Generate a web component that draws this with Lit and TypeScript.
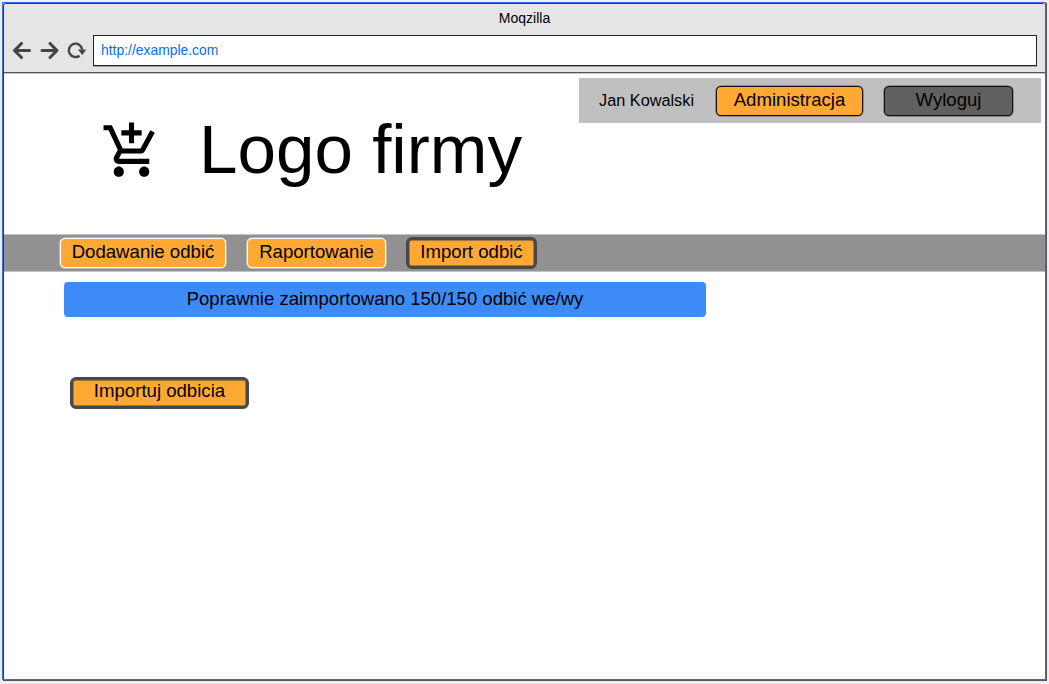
import { LitElement, html, css } from "lit";
import { customElement } from "lit/decorators.js";

@customElement("app-root")
export class AppRoot extends LitElement {
  static styles = css`
    :host {
      display: block;
      box-sizing: border-box;
      width: 1049px;
      height: 684px;
      padding: 2px;
      background: #eeeeee;
      overflow: hidden;
      font-family: "Liberation Sans", Arial, sans-serif;
      color: #000;
      white-space: nowrap;
    }
    * { box-sizing: border-box; }
    svg { display: block; flex: none; }
    .frame {
      width: 1044px;
      height: 678px;
      border: 1px solid #3a68e8;
      box-shadow: 1px 1px 0 #55556a;
    }
    .window {
      height: 676px;
      border-top: 1px solid #333b55;
      border-left: 1px solid #333b55;
      border-top-left-radius: 3px;
      border-top-right-radius: 3px;
      background: #fff;
      overflow: hidden;
    }
    .chrome {
      height: 69px;
      background: #e5e5e5;
      border-bottom: 1px solid #555;
    }
    .title {
      height: 31px;
      padding-top: 6px;
      font-size: 14px;
      line-height: 16px;
      text-align: center;
    }
    .bar { display: flex; padding-left: 8px; }
    .url {
      width: 944px;
      height: 31px;
      padding: 6px 7px;
      margin-left: 5px;
      border: 1px solid #222;
      background: #fff;
      box-shadow: 0 1px 0 #a0a0a0;
      color: #0a6cf0;
      font-size: 13.9px;
      line-height: 16px;
    }
    .header {
      display: flex;
      height: 161px;
      border-top: 1px solid #c8c8c8;
    }
    .brand { display: flex; width: 575px; padding-left: 97px; }
    .cart { margin-top: 46px; }
    .logo {
      margin: 35px 0 0 37px;
      font-size: 69.2px;
      line-height: 80px;
    }
    .user {
      display: flex;
      width: 462px;
      height: 45px;
      margin-top: 4px;
      padding: 8px 0 0 20px;
      background: #c0c0c0;
    }
    .name {
      width: 117px;
      padding-top: 5px;
      font-size: 16.3px;
      line-height: 18px;
    }
    .btn {
      height: 30px;
      border: 1px solid #111;
      border-radius: 5px;
      background: #ffa834;
      box-shadow: 0 0 0 0.5px #555;
      font-size: 18.6px;
      line-height: 26px;
      text-align: center;
    }
    .admin { width: 147px; }
    .logout { width: 129px; margin-left: 21px; background: #606060; }
    .nav {
      display: flex;
      height: 38px;
      padding: 3px 0 0 56px;
      background: #919191;
      border-top: 1px solid #c4c4c4;
      border-bottom: 1px solid #c4c4c4;
    }
    .add { width: 166px; border-color: #fff; box-shadow: 0 0 0 0.5px #ddd; }
    .report { width: 139px; margin-left: 21px; border-color: #fff; box-shadow: 0 0 0 0.5px #ddd; }
    .strong {
      height: 32px;
      border: 3px solid #484848;
      border-radius: 6px;
      box-shadow: inset 0 0 0 0.5px #484848;
      line-height: 23px;
    }
    .import { width: 131px; margin: -1px 0 0 20px; }
    .content { padding: 10px 0 0 60px; }
    .notice {
      width: 642px;
      height: 35px;
      border-radius: 4px;
      background: #3d8bf8;
      font-size: 18.54px;
      line-height: 33px;
      text-align: center;
    }
    .run { width: 179px; margin: 60px 0 0 6px; line-height: 21px; }
  `;

  render() {
    return html`
      <div class="frame">
        <div class="window">
          <div class="chrome">
            <div class="title">Moqzilla</div>
            <div class="bar">
              <svg width="76" height="31" viewBox="12 35 76 31" fill="none" stroke="#444" stroke-width="3.1" stroke-linecap="round" stroke-linejoin="round">
                <path d="M29.5 50.5H15M21.5 43.5L14.5 50.5L21.5 57.5" />
                <path d="M42 50.5H56.5M50 43.5L57 50.5L50 57.5" />
                <path d="M79.6 55.7A6.7 6.7 0 1 1 82.2 49.5" stroke-width="2.4" stroke-linecap="butt" />
                <path d="M78 49.5H86.3L82.2 55Z" fill="#444" stroke="none" />
              </svg>
              <div class="url">http://example.com</div>
            </div>
          </div>
          <div class="header">
            <div class="brand">
              <svg class="cart" width="61" height="62" viewBox="0 0 24 24" preserveAspectRatio="none">
                <path d="M11 9h2V6h3V4h-3V1h-2v3H8v2h3v3zm-4 9c-1.1 0-1.99.9-1.99 2S5.9 22 7 22s2-.9 2-2-.9-2-2-2zm10 0c-1.1 0-1.99.9-1.99 2s.89 2 1.99 2 2-.9 2-2-.9-2-2-2zm-9.83-3.25l.03-.12.9-1.63h7.45c.75 0 1.41-.41 1.75-1.03l3.86-7.01L19.42 4h-.01l-1.1 2-2.76 5H8.53l-.13-.27L6.16 6l-.95-2-.94-2H1v2h2l3.6 7.59-1.35 2.45c-.16.28-.25.61-.25.96 0 1.1.9 2 2 2h12v-2H7.42c-.13 0-.25-.11-.25-.25z" />
              </svg>
              <div class="logo">Logo firmy</div>
            </div>
            <div class="user">
              <div class="name">Jan Kowalski</div>
              <div class="btn admin">Administracja</div>
              <div class="btn logout">Wyloguj</div>
            </div>
          </div>
          <div class="nav">
            <div class="btn add">Dodawanie odbić</div>
            <div class="btn report">Raportowanie</div>
            <div class="btn strong import">Import odbić</div>
          </div>
          <div class="content">
            <div class="notice">Poprawnie zaimportowano 150/150 odbić we/wy</div>
            <div class="btn strong run">Importuj odbicia</div>
          </div>
        </div>
      </div>
    `;
  }
}
